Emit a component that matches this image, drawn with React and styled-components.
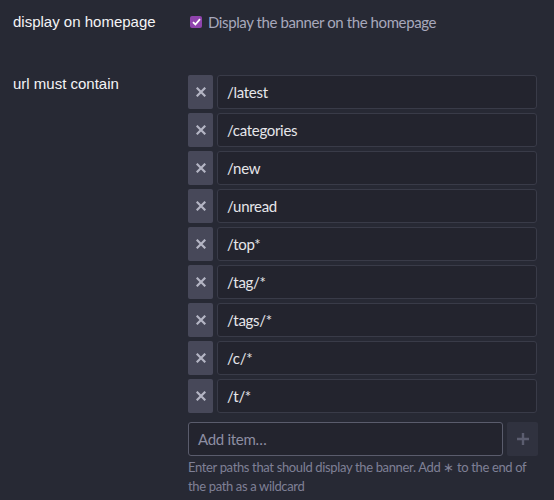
import React from 'react'
import styled, { createGlobalStyle } from 'styled-components'

const GlobalStyle = createGlobalStyle`
    html, body {
        margin: 0;
        padding: 0;
        background: #272934;
    }
`;

const Page = styled.div`
    width: 554px;
    height: 500px;
    overflow: hidden;
    background: #272934;
    padding: 10px 0 0 13px;
    box-sizing: border-box;
`;

const Setting = styled.div`
    display: grid;
    grid-template-columns: 175px 1fr;
    margin-bottom: ${props => props.gap || 0}px;
`;

const Label = styled.div`
    font-family: "Liberation Sans", Arial, sans-serif;
    font-size: 15px;
    color: #f4f4f6;
    line-height: ${props => props.lh || 24}px;
    padding-top: ${props => props.offset || 0}px;
`;

const CheckRow = styled.label`
    display: flex;
    align-items: center;
    gap: 6px;
    height: 24px;
    font-family: Lato, "Open Sans", sans-serif;
    font-size: 15px;
    letter-spacing: -0.4px;
    color: #a7a8bc;
`;

const Check = styled.span`
    width: 12px;
    height: 12px;
    border-radius: 2px;
    background: #8f44ad;
    display: flex;
    align-items: center;
    justify-content: center;
    margin-left: 2px;
`;

const List = styled.div`
    display: flex;
    flex-direction: column;
    gap: 4px;
    width: 349px;
`;

const Row = styled.div`
    display: flex;
    gap: 4px;
    height: 34px;
`;

const RemoveButton = styled.button`
    width: 25px;
    border: none;
    border-radius: 2px;
    background: #474859;
    padding: 0;
    display: flex;
    align-items: center;
    justify-content: center;
`;

const Value = styled.div`
    flex: 1;
    border: 1px solid #393b48;
    border-radius: 3px;
    background: #23242e;
    font-family: Lato, "Open Sans", sans-serif;
    font-size: 15px;
    letter-spacing: -0.3px;
    color: #e6e6ea;
    display: flex;
    align-items: center;
    padding-left: 9px;
`;

const AddRow = styled.div`
    display: flex;
    gap: 4px;
    height: 34px;
    margin-top: 9px;
    width: 350px;
`;

const AddInput = styled.div`
    flex: 1;
    border: 1px solid #5a5c6c;
    border-radius: 3px;
    background: #23242e;
    font-family: Lato, "Open Sans", sans-serif;
    font-size: 15px;
    letter-spacing: -0.3px;
    color: #8d8ea2;
    display: flex;
    align-items: center;
    padding-left: 9px;
`;

const AddButton = styled.button`
    width: 31px;
    border: none;
    border-radius: 2px;
    background: #30323f;
    padding: 0;
    display: flex;
    align-items: center;
    justify-content: center;
`;

const Help = styled.div`
    font-family: Lato, "Open Sans", sans-serif;
    font-size: 13px;
    letter-spacing: -0.35px;
    line-height: 19px;
    color: #7f8096;
    margin-top: 2px;
    width: 350px;
`;

const items = ['/latest', '/categories', '/new', '/unread', '/top*', '/tag/*', '/tags/*', '/c/*', '/t/*'];

const Cross = () => (
    <svg width="10" height="10" viewBox="0 0 10 10">
        <path d="M1.5 1.5 L8.5 8.5 M8.5 1.5 L1.5 8.5" stroke="#b4b5c4" strokeWidth="2.2" strokeLinecap="square" />
    </svg>
);

const Plus = () => (
    <svg width="14" height="14" viewBox="0 0 14 14">
        <path d="M7 1 V13 M1 7 H13" stroke="#5b5d6f" strokeWidth="2.4" />
    </svg>
);

export default function App() {
    return (
        <Page>
            <GlobalStyle />
            <Setting gap={41}>
                <Label>display on homepage</Label>
                <CheckRow>
                    <Check>
                        <svg width="9" height="8" viewBox="0 0 9 8">
                            <path d="M1 4.2 L3.4 6.5 L8 1.2" stroke="#fff" strokeWidth="1.8" fill="none" />
                        </svg>
                    </Check>
                    Display the banner on the homepage
                </CheckRow>
            </Setting>
            <Setting>
                <Label lh={17}>url must contain</Label>
                <div>
                    <List>
                        {items.map(item => (
                            <Row key={item}>
                                <RemoveButton><Cross /></RemoveButton>
                                <Value>{item}</Value>
                            </Row>
                        ))}
                    </List>
                    <AddRow>
                        <AddInput>Add item…</AddInput>
                        <AddButton><Plus /></AddButton>
                    </AddRow>
                    <Help>Enter paths that should display the banner. Add ∗ to the end of the path as a wildcard</Help>
                </div>
            </Setting>
        </Page>
    )
}
